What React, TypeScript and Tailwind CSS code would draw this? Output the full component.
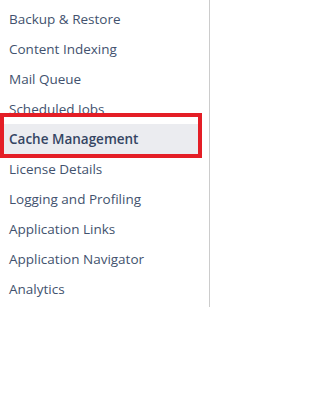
import React from "react";

const items = [
  "Backup & Restore",
  "Content Indexing",
  "Mail Queue",
  "Scheduled Jobs",
  "Cache Management",
  "License Details",
  "Logging and Profiling",
  "Application Links",
  "Application Navigator",
  "Analytics",
];

export default function App() {
  return (
    <div className="relative w-[316px] h-[400px] bg-white" style={{ fontFamily: '"Open Sans", "Noto Sans", sans-serif' }}>
      <div className="w-[210px] h-[307px] border-r border-[#cccccc] pt-[4px] pr-[8px]">
        {items.map((t) => {
          const active = t === "Cache Management";
          return (
            <div
              key={t}
              className={
                "h-[30px] flex items-center pl-[9px] text-[13.5px] " +
                (active ? "bg-[#ebecf0] font-semibold text-[#344563]" : "text-[#42526e]")
              }
            >
              {t}
            </div>
          );
        })}
      </div>
      <div className="absolute left-0 top-[113px] w-[202px] h-[45px] border-[4px] border-[#e41e26]" />
    </div>
  );
}
